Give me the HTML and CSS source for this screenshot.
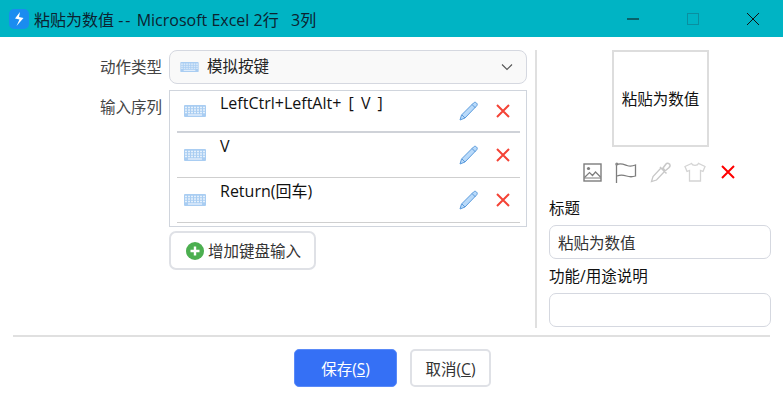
FILE: index.html
```html
<!DOCTYPE html>
<html lang="en">
<head>
  <meta charset="UTF-8">
  <title>粘贴为数值</title>
  <link rel="stylesheet" href="styles.css">
</head>
<body>
  <svg class="defs" width="0" height="0">
    <symbol id="kbd" viewBox="0 0 22 12">
      <rect x="0" y="0" width="22" height="12" rx="1" fill="#a9cdf2"/>
      <path d="M1 2.500h20M1 5h20M1 7.500h20" stroke="#e6f1fc" stroke-width="1.300" stroke-dasharray="2 1"/>
      <path d="M4 10h14" stroke="#e6f1fc" stroke-width="1.300"/>
    </symbol>
    <symbol id="pen" viewBox="0 0 20 20">
      <path d="M1 19l1.500-5L14.500 2c1-1 2-1 3 0s1 2 0 3L6 17z" fill="#b9dafa" stroke="#5b9bdc" stroke-width="1"/>
      <path d="M3 14l3 3M13 3.500l3.500 3.500" stroke="#5b9bdc" stroke-width="1" fill="none"/>
    </symbol>
    <symbol id="del" viewBox="0 0 14 14">
      <path d="M1 1l12 12M13 1L1 13" stroke="#f44336" stroke-width="2" fill="none"/>
    </symbol>
  </svg>

  <div class="titlebar">
    <svg class="app-icon" width="20" height="20" viewBox="0 0 20 20">
      <rect width="20" height="20" rx="5" fill="#1a8cf0"/>
      <path d="M11 3L6 9.500l4.500 1L7.500 17 14.500 9 10 8z" fill="#fff"/>
    </svg>
    <span class="title-text">粘贴为数值 <span class="title-dash">--</span> Microsoft Excel 2行&nbsp;&nbsp;&nbsp;3列</span>
    <div class="win-btns">
      <svg width="14" height="14" viewBox="0 0 14 14"><path d="M1 7h12" stroke="#111" stroke-width="1"/></svg>
      <svg width="14" height="14" viewBox="0 0 14 14"><rect x="1.500" y="1.500" width="11" height="11" fill="none" stroke="#0a8fa0"/></svg>
      <svg width="14" height="14" viewBox="0 0 14 14"><path d="M1 1l12 12M13 1L1 13" stroke="#111" stroke-width="1"/></svg>
    </div>
  </div>

  <div class="main">
    <div class="left">
      <div class="form-row">
        <div class="row-label">动作类型</div>
        <div class="select">
          <svg class="kbd-small" width="19" height="10"><use href="#kbd"/></svg>
          <span class="select-text">模拟按键</span>
          <svg class="chevron" width="12" height="8" viewBox="0 0 12 8"><path d="M1 1.500l5 5 5-5" stroke="#555" stroke-width="1.100" fill="none"/></svg>
        </div>
      </div>
      <div class="form-row">
        <div class="row-label">输入序列</div>
        <div class="seq-col">
          <div class="seq-list">
            <div class="seq-item seq-first">
              <svg class="kbd-icon" width="22" height="12"><use href="#kbd"/></svg>
              <span class="seq-text">LeftCtrl+LeftAlt+ [ V ]</span>
              <svg class="pen" width="20" height="20"><use href="#pen"/></svg>
              <svg class="del" width="14" height="14"><use href="#del"/></svg>
            </div>
            <div class="seq-item">
              <svg class="kbd-icon" width="22" height="12"><use href="#kbd"/></svg>
              <span class="seq-text">V</span>
              <svg class="pen" width="20" height="20"><use href="#pen"/></svg>
              <svg class="del" width="14" height="14"><use href="#del"/></svg>
            </div>
            <div class="seq-item">
              <svg class="kbd-icon" width="22" height="12"><use href="#kbd"/></svg>
              <span class="seq-text">Return(回车)</span>
              <svg class="pen" width="20" height="20"><use href="#pen"/></svg>
              <svg class="del" width="14" height="14"><use href="#del"/></svg>
            </div>
          </div>
          <button class="add-btn">
            <svg width="18" height="18" viewBox="0 0 18 18"><circle cx="9" cy="9" r="9" fill="#4caf50"/><path d="M9 4.500v9M4.500 9h9" stroke="#fff" stroke-width="2.400"/></svg>
            增加键盘输入
          </button>
        </div>
      </div>
    </div>

    <div class="right">
      <div class="preview">粘贴为数值</div>
      <div class="tools">
        <svg width="19" height="19" viewBox="0 0 19 19"><rect x="1" y="1" width="17" height="17" fill="none" stroke="#7d7d7d" stroke-width="1.400"/><path d="M1.500 14.500l5-5 3 3 3-3.500 5 5" fill="none" stroke="#7d7d7d" stroke-width="1.200"/><circle cx="5.500" cy="5.500" r="1.600" fill="#7d7d7d"/><path d="M1 15h17" stroke="#7d7d7d"/></svg>
        <svg width="22" height="21" viewBox="0 0 22 21"><path d="M1.500 2v19" stroke="#7d7d7d" stroke-width="1.300"/><circle cx="1.800" cy="2" r="1.600" fill="#8d8d8d"/><path d="M2 2.500c4-1.500 7 0 10 1s6 .5 8.500-.5v11c-3 1-6 1-9 0s-6-1.500-9.500 0" fill="none" stroke="#7d7d7d" stroke-width="1.300"/></svg>
        <svg width="21" height="21" viewBox="0 0 21 21"><path d="M11 6L3 14.500l-1.500 5L6.500 18l8-8.500" fill="none" stroke="#c8c8c8" stroke-width="1.300"/><path d="M10 5l6.500 6.500M13 6l3-4c1-1.300 4.500-.5 4 2-.2 1-1 1.500-1.500 2l-3.500 3z" fill="none" stroke="#c8c8c8" stroke-width="1.500"/></svg>
        <svg width="22" height="20" viewBox="0 0 22 20"><path d="M7.500 1.500L1 4.500l2 5 2.500-1V19h11V8.500l2.500 1 2-5-6.500-3c-1 2.500-6 2.500-7 0z" fill="none" stroke="#d4d4d4" stroke-width="1.300"/></svg>
        <svg class="tool-del" width="14" height="14" viewBox="0 0 14 14"><path d="M1 1l12 12M13 1L1 13" stroke="#f00" stroke-width="2" fill="none"/></svg>
      </div>
      <div class="field-label">标题</div>
      <input class="field" type="text" value="粘贴为数值">
      <div class="field-label field-label-2">功能/用途说明</div>
      <input class="field" type="text">
    </div>
  </div>

  <div class="footer">
    <button class="btn btn-save">保存(<u>S</u>)</button>
    <button class="btn btn-cancel">取消(<u>C</u>)</button>
  </div>
</body>
</html>
```

FILE: styles.css
```css
* {
  box-sizing: border-box;
}
body {
  margin: 0;
  background-color: #fff;
  color: #222;
  font-family: "Open Sans", "Noto Sans CJK SC", sans-serif;
  font-size: 15.5px;
  overflow: hidden;
}
.defs {
  display: block;
  height: 0;
}
.titlebar {
  display: flex;
  align-items: center;
  height: 37px;
  padding-left: 9px;
  background-color: #00b4c4;
  color: #0c2230;
}
.app-icon {
  margin-right: 5px;
}
.title-text {
  font-size: 16px;
}
.title-dash {
  letter-spacing: 2px;
}
.win-btns {
  display: flex;
  gap: 46px;
  margin-left: auto;
  padding-right: 23px;
  align-items: center;
}
.main {
  display: flex;
  padding: 13px 12px 0 0;
  height: 291px;
}
.left {
  width: 537px;
  padding-right: 7px;
  border-right: 2px solid #e0e0e0;
  height: 278px;
}
.form-row {
  display: flex;
  margin-bottom: 6px;
}
.row-label {
  width: 162px;
  margin-right: 7px;
  padding-top: 5px;
  text-align: right;
  color: #444;
}
.select {
  display: flex;
  align-items: center;
  width: 358px;
  height: 34px;
  padding: 0 13px 0 10px;
  background-color: #f9f9f9;
  border: 1px solid #d5d8e0;
  border-radius: 8px;
}
.select-text {
  margin-left: 8px;
  line-height: 30px;
  margin-top: -2px;
}
.chevron {
  margin-left: auto;
}
.seq-col {
  width: 358px;
}
.seq-list {
  height: 137px;
  padding: 0 6px 4px 7px;
  border: 1px solid #d0d5dd;
}
.seq-item {
  display: flex;
  align-items: center;
  height: 45px;
  padding-left: 7px;
  border-bottom: 1px solid #cfcfcf;
}
.seq-first {
  height: 42px;
  border-bottom: 2px solid #cfd2d8;
}
.seq-text {
  align-self: flex-start;
  margin-top: 2px;
  margin-left: 14px;
  line-height: 22px;
  color: #111;
  font-size: 16px;
  word-spacing: 3px;
}
.seq-first .seq-text {
  margin-top: 1px;
}
.pen {
  margin-left: auto;
}
.del {
  margin-left: 17px;
  margin-right: 10px;
}
.add-btn {
  display: flex;
  align-items: center;
  gap: 4px;
  width: 147px;
  height: 39px;
  margin-top: 4px;
  padding: 0 0 0 15px;
  background-color: #fff;
  border: 2px solid #dfe1e6;
  border-radius: 7px;
  color: #333;
  font-family: inherit;
  font-size: 15.5px;
}
.right {
  flex: 1;
  margin-left: 12px;
}
.preview {
  display: flex;
  align-items: center;
  justify-content: center;
  width: 97px;
  height: 97px;
  margin-left: 63px;
  border: 2px solid #ddd;
  color: #111;
}
.tools {
  display: flex;
  align-items: center;
  gap: 13px;
  height: 20px;
  margin: 15px 0 0 34px;
}
.tool-del {
  margin-left: 2px;
}
.field-label {
  margin-top: 16px;
  margin-bottom: 7px;
  line-height: 20px;
  color: #111;
}
.field-label-2 {
  margin-top: 7px;
  margin-bottom: 7px;
}
.field {
  display: block;
  width: 222px;
  height: 34px;
  padding: 0 8px;
  background-color: #fff;
  border: 1px solid #d5d8e0;
  border-radius: 7px;
  color: #333;
  font-family: inherit;
  font-size: 15.5px;
}
.footer {
  display: flex;
  justify-content: center;
  gap: 13px;
  margin: 7px 13px 0;
  padding-top: 12px;
  padding-left: 2px;
  border-top: 2px solid #e0e0e0;
}
.btn {
  height: 38px;
  border-radius: 5px;
  font-family: inherit;
  font-size: 15.5px;
}
.btn-save {
  width: 103px;
  background-color: #3570f5;
  border: 1px solid #5a8af8;
  color: #fff;
}
.btn-cancel {
  width: 81px;
  background-color: #fff;
  border: 2px solid #dfe1e6;
  color: #333;
}
```
